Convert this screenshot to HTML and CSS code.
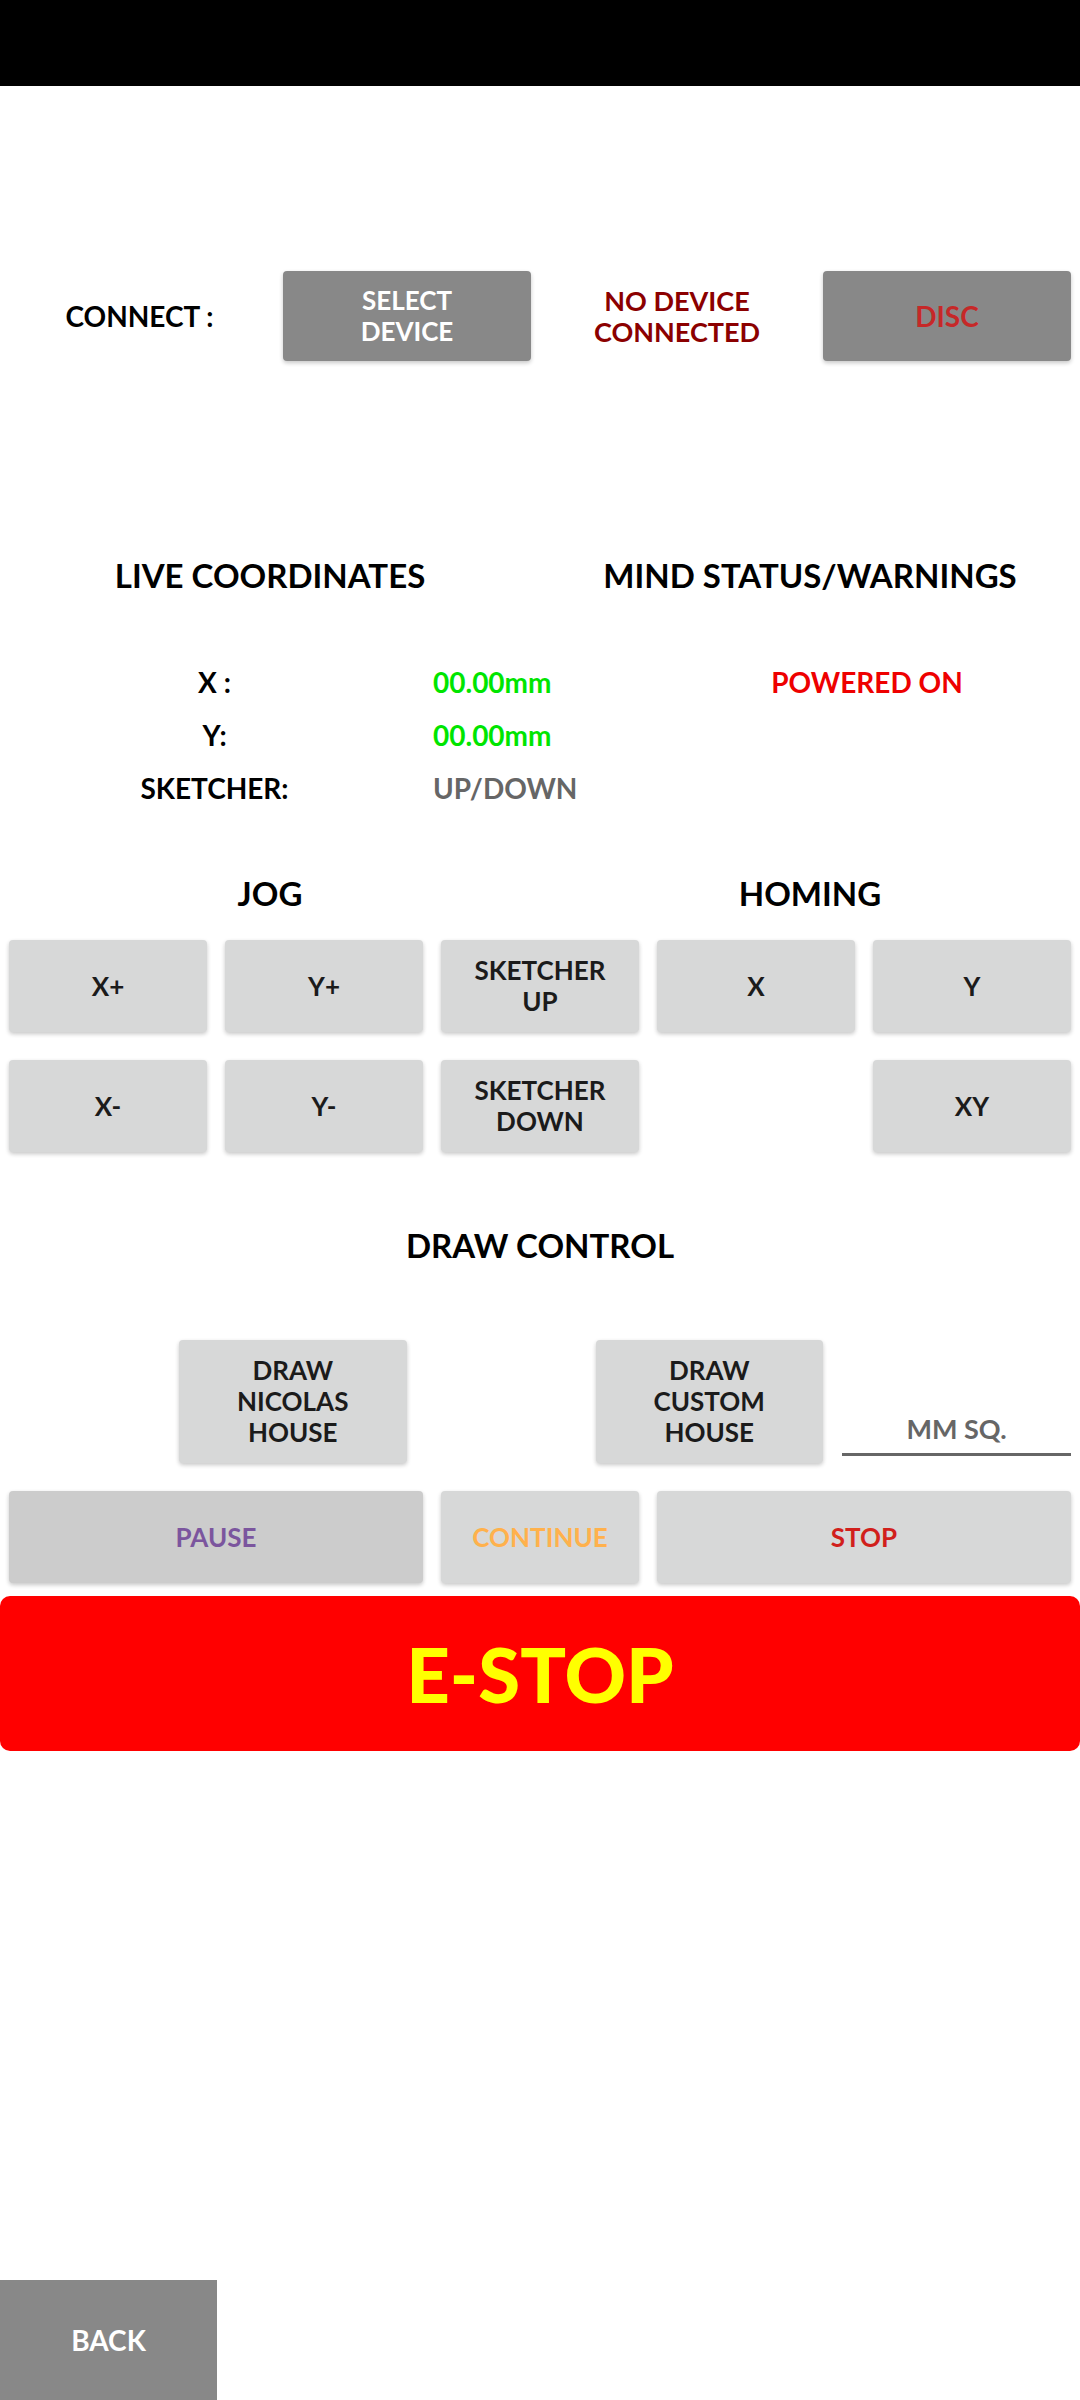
FILE: index.html
```html
<!DOCTYPE html>
<html lang="en">
<head>
    <meta charset="UTF-8">
    <meta name="viewport" content="width=device-width, initial-scale=1.0">
    <title>Sketcher Control</title>
    <link rel="stylesheet" href="styles.css">
</head>
<body>
    <div class="status-bar"></div>

    <div class="connect-row">
        <span class="connect-label">CONNECT :</span>
        <button class="btn btn-dark">SELECT<br>DEVICE</button>
        <span class="device-status">NO DEVICE<br>CONNECTED</span>
        <button class="btn btn-dark disc">DISC</button>
    </div>

    <div class="two-headers info-headers">
        <h2>LIVE COORDINATES</h2>
        <h2>MIND STATUS/WARNINGS</h2>
    </div>

    <div class="coords">
        <span class="coord-label">X :</span>
        <span class="coord-value">00.00mm</span>
        <span class="warning">POWERED ON</span>

        <span class="coord-label">Y:</span>
        <span class="coord-value">00.00mm</span>
        <span></span>

        <span class="coord-label">SKETCHER:</span>
        <span class="coord-value pen">UP/DOWN</span>
        <span></span>
    </div>

    <div class="two-headers jog-headers">
        <h2>JOG</h2>
        <h2>HOMING</h2>
    </div>

    <div class="grid5 jog-grid">
        <button class="btn">X+</button>
        <button class="btn">Y+</button>
        <button class="btn">SKETCHER<br>UP</button>
        <button class="btn">X</button>
        <button class="btn">Y</button>

        <button class="btn">X-</button>
        <button class="btn">Y-</button>
        <button class="btn">SKETCHER<br>DOWN</button>
        <span></span>
        <button class="btn">XY</button>
    </div>

    <h2 class="draw-title">DRAW CONTROL</h2>

    <div class="draw-row">
        <button class="btn draw-btn">DRAW<br>NICOLAS<br>HOUSE</button>
        <button class="btn draw-btn custom">DRAW<br>CUSTOM<br>HOUSE</button>
        <input class="mm-input" type="text" placeholder="MM SQ.">
    </div>

    <div class="grid5 control-row">
        <button class="btn pause">PAUSE</button>
        <button class="btn continue">CONTINUE</button>
        <button class="btn stop">STOP</button>
    </div>

    <button class="estop">E-STOP</button>

    <button class="back">BACK</button>
</body>
</html>
```

FILE: styles.css
```css
body {
    margin: 0;
    min-height: 2400px;
    display: flex;
    flex-direction: column;
    font-family: Lato, "Open Sans", sans-serif;
    font-weight: 700;
    background: #fff;
    color: #000;
}
button {
    font-family: inherit;
    font-weight: 700;
    border: none;
    cursor: pointer;
}
h2 {
    margin: 0;
    font-size: 33px;
    line-height: 40px;
    font-weight: 700;
    text-align: center;
}
.status-bar {
    height: 86px;
    background: #000;
}
.btn {
    background: #d7d8d8;
    color: #1b1b1b;
    border-radius: 4px;
    font-size: 26px;
    line-height: 31px;
    box-shadow: 0 2px 4px rgba(0, 0, 0, 0.22);
    padding: 0;
}
.btn-dark {
    background: #888888;
    color: #fff;
}
.connect-row {
    margin-top: 185px;
    padding: 0 9px 0 8px;
    height: 90px;
    display: grid;
    grid-template-columns: 275px 248px 1fr 248px;
    align-items: center;
}
.connect-row .btn {
    height: 90px;
}
.connect-label {
    font-size: 28px;
    text-align: center;
    padding-right: 12px;
}
.device-status {
    color: #8b0000;
    font-size: 27px;
    line-height: 31px;
    text-align: center;
}
.disc {
    color: #c62828;
    font-size: 28px;
}
.two-headers {
    display: grid;
    grid-template-columns: 1fr 1fr;
}
.info-headers {
    margin-top: 194px;
}
.coords {
    margin-top: 60px;
    display: grid;
    grid-template-columns: 433px 221px 1fr;
    grid-auto-rows: 53px;
    align-items: center;
    font-size: 28px;
}
.coord-label {
    text-align: center;
    padding-right: 4px;
}
.coord-value {
    color: #00e500;
}
.coord-value.pen {
    color: #666666;
}
.warning {
    color: #ee0000;
    text-align: center;
}
.jog-headers {
    margin-top: 59px;
}
.grid5 {
    display: grid;
    grid-template-columns: repeat(5, 1fr);
    column-gap: 18px;
    row-gap: 28px;
    padding: 0 9px;
}
.jog-grid {
    margin-top: 27px;
    grid-auto-rows: 92px;
}
.draw-title {
    margin-top: 73px;
}
.draw-row {
    margin-top: 75px;
    display: flex;
    align-items: flex-end;
    padding: 0 9px 0 179px;
}
.draw-btn {
    width: 228px;
    height: 123px;
}
.custom {
    margin-left: 189px;
}
.mm-input {
    margin-left: 19px;
    width: 229px;
    height: 52px;
    margin-bottom: 7px;
    box-sizing: border-box;
    border: none;
    border-bottom: 3px solid #666;
    outline: none;
    background: transparent;
    font-family: inherit;
    font-weight: 700;
    font-size: 27px;
    text-align: center;
    color: #666;
}
.mm-input::placeholder {
    color: #666;
}
.control-row {
    margin-top: 28px;
    grid-auto-rows: 92px;
}
.pause {
    grid-column: span 2;
    background: #cccccc;
    color: #7b559e;
}
.continue {
    color: #ffb14c;
}
.stop {
    grid-column: span 2;
    color: #d11f1c;
}
.estop {
    margin-top: 13px;
    height: 155px;
    width: 100%;
    background: #ff0000;
    color: #ffff00;
    border-radius: 10px;
    font-size: 76px;
    font-weight: 900;
}
.back {
    margin-top: auto;
    width: 217px;
    height: 120px;
    background: #888888;
    color: #fff;
    font-size: 28px;
    border-radius: 0;
}
```
